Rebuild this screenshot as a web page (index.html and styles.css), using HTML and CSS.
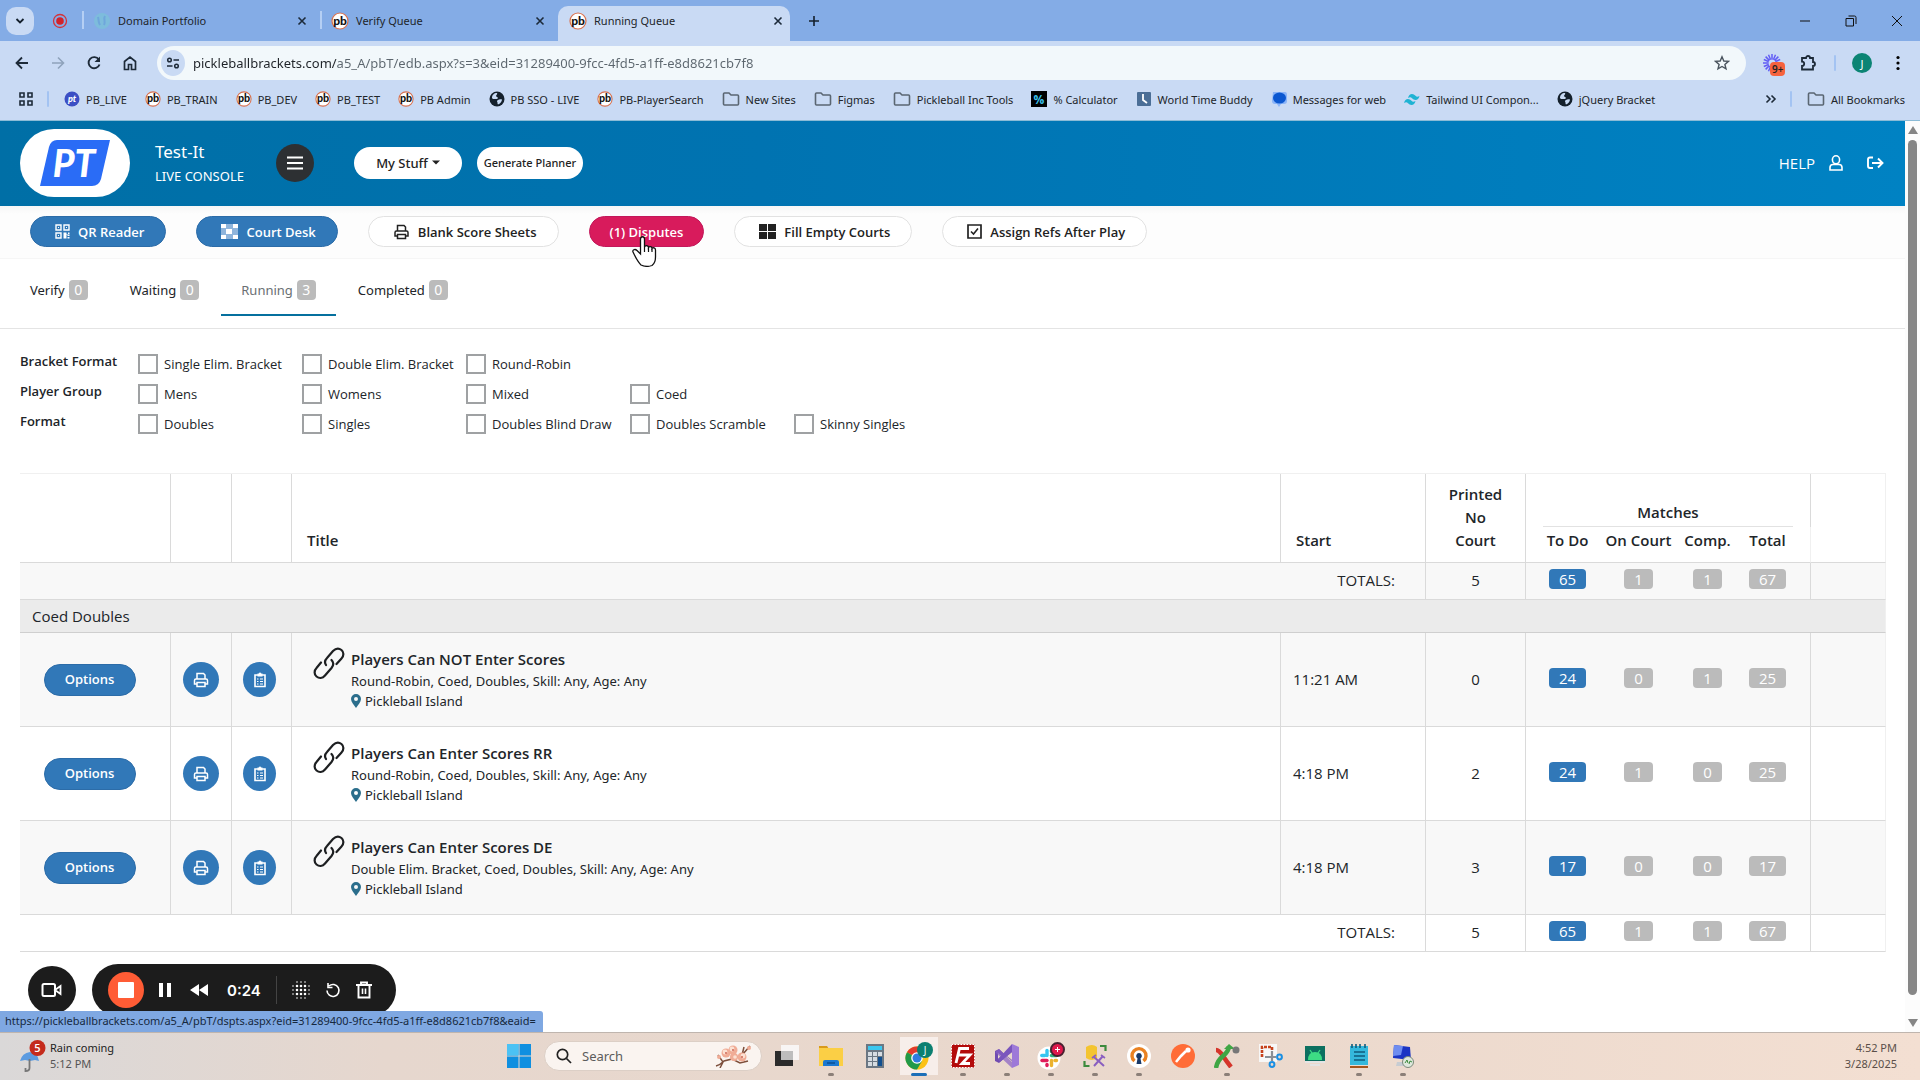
FILE: index.html
```html
<!DOCTYPE html>
<html lang="en">
<head>
<meta charset="utf-8">
<title>Running Queue</title>
<link rel="stylesheet" href="styles.css">
</head>
<body>
<svg class="defs" aria-hidden="true">
  <defs>
    <symbol id="i-pb" viewBox="0 0 18 18"><circle cx="9" cy="9" r="8" fill="#fff" stroke="#d9714f" stroke-width="1.200"/><text x="9" y="12.600" text-anchor="middle" class="glyph-pb">pb</text></symbol>
    <symbol id="i-globe" viewBox="0 0 16 16"><circle cx="8" cy="8" r="7.500" fill="#14202c"/><path d="M3 7c0-3 2-5 5-5 1 1-1 2-1 3s2 1 2 2-2 1-3 1-3 0-3-1zM9 9c1-1 3-1 4-.500 0 2-2 4.500-4 5-1-1 0-2-1-3 0-1 .5-1 1-1.500z" fill="#c8daf4"/></symbol>
    <symbol id="i-folder" viewBox="0 0 18 16"><path d="M1.500 3.500v9.500q0 1 1 1h13q1 0 1-1V5q0-1-1-1H9L7 2H2.500q-1 0-1 1z" fill="none" stroke="#5a6672" stroke-width="1.600"/></symbol>
    <symbol id="i-x" viewBox="0 0 10 10"><path d="M1.500 1.500l7 7M8.500 1.500l-7 7" stroke="#1c2a3a" stroke-width="1.600" fill="none"/></symbol>
    <symbol id="i-printer" viewBox="0 0 16 16"><path d="M4 7V1.500h6.500L12 3v4M4 12H1.500V8.500Q1.500 7 3 7h10q1.500 0 1.500 1.500V12H12M4 10.500h8v4H4z" fill="none" stroke="currentColor" stroke-width="1.500"/></symbol>
    <symbol id="i-clip" viewBox="0 0 14 16"><path d="M2 3h10v11.500H2z" fill="none" stroke="currentColor" stroke-width="1.600"/><path d="M4.500 1.500h1.500a1 1 0 0 1 2 0h1.500v3h-5z" fill="currentColor"/><path d="M4 7h1.500M7 7h3M4 9.500h1.500M7 9.500h3M4 12h1.500M7 12h3" stroke="currentColor" stroke-width="1.200"/></symbol>
    <symbol id="i-link" viewBox="0 0 32 32"><g fill="none" stroke="#1d1f21" stroke-width="2.200" stroke-linecap="round"><path d="M13 18c-2-3-1-5 1-7l6-7c3-3 6-3 8.500-1s2.500 6 0 8.500l-5 5.500"/><path d="M18.500 13c2.500 2.500 2 5.500 0 8l-6.500 7.500c-2.500 3-6 3-8.500 1s-2.500-6 0-8.500L8 15.500"/></g></symbol>
    <symbol id="i-pin" viewBox="0 0 10 14"><path d="M5 0a5 5 0 0 1 5 5c0 3-3 6-5 9C3 11 0 8 0 5a5 5 0 0 1 5-5zm0 3a2 2 0 1 0 0 4 2 2 0 0 0 0-4z" fill="#2b6e8c" fill-rule="evenodd"/></symbol>
  </defs>
</svg>

<header class="browser">
  <div class="tabstrip">
    <button class="tab-menu" aria-label="Search tabs"><svg width="10" height="8" viewBox="0 0 10 8"><path d="M1.500 2L5 5.500 8.500 2" fill="none" stroke="#14202c" stroke-width="1.800"/></svg></button>
    <svg class="rec-dot" width="16" height="16" viewBox="0 0 16 16"><circle cx="8" cy="8" r="6.500" fill="none" stroke="#d2333a" stroke-width="1.300"/><circle cx="8" cy="8" r="3.800" fill="#d2232a"/></svg>
    <div class="tab first"><svg width="18" height="18" viewBox="0 0 18 18"><circle cx="9" cy="9" r="8" fill="#7dbcdc"/><path d="M5 5c1 3 0 5 2 8M12 4c-2 3 1 5-1 9" stroke="#6fa6dc" fill="none" stroke-width="2"/></svg><span>Domain Portfolio</span><button aria-label="Close tab"><svg width="10" height="10"><use href="#i-x"/></svg></button></div>
    <div class="tab"><svg width="18" height="18"><use href="#i-pb"/></svg><span>Verify Queue</span><button aria-label="Close tab"><svg width="10" height="10"><use href="#i-x"/></svg></button></div>
    <div class="tab active"><svg width="18" height="18"><use href="#i-pb"/></svg><span>Running Queue</span><button aria-label="Close tab"><svg width="10" height="10"><use href="#i-x"/></svg></button></div>
    <button class="bare new-tab" aria-label="New tab"><svg width="12" height="12" viewBox="0 0 12 12"><path d="M6 1v10M1 6h10" stroke="#14202c" stroke-width="1.600"/></svg></button>
    <div class="win-controls">
      <button class="bare" aria-label="Minimize"><svg width="12" height="12" viewBox="0 0 12 12"><path d="M1 6h10" stroke="#111"/></svg></button>
      <button class="bare" aria-label="Restore"><svg width="12" height="12" viewBox="0 0 12 12"><path d="M1 3.500h7.500v7.500H1zM3.500 1H9.500q1.500 0 1.500 1.500V9" fill="none" stroke="#111"/></svg></button>
      <button class="bare" aria-label="Close"><svg width="12" height="12" viewBox="0 0 12 12"><path d="M1 1l10 10M11 1L1 11" stroke="#111"/></svg></button>
    </div>
  </div>

  <div class="navbar">
    <button class="bare nav" aria-label="Back"><svg width="16" height="16" viewBox="0 0 16 16"><path d="M14 8H3M8 2.500L2.500 8 8 13.500" fill="none" stroke="#1d2a38" stroke-width="1.800"/></svg></button>
    <button class="bare nav" aria-label="Forward"><svg width="16" height="16" viewBox="0 0 16 16"><path d="M2 8h11M8 2.500L13.500 8 8 13.500" fill="none" stroke="#8fa3bb" stroke-width="1.600"/></svg></button>
    <button class="bare nav" aria-label="Reload"><svg width="16" height="16" viewBox="0 0 16 16"><path d="M12.800 4.500A5.600 5.600 0 1 0 13.500 9.500" fill="none" stroke="#1d2a38" stroke-width="1.900"/><path d="M14 1.500v5.500H8.500z" fill="#1d2a38"/></svg></button>
    <button class="bare nav" aria-label="Home"><svg width="16" height="16" viewBox="0 0 16 16"><path d="M2.500 14.500V6.500L8 2l5.500 4.500v8h-4v-5h-3v5z" fill="none" stroke="#1d2a38" stroke-width="1.700"/></svg></button>
    <div class="omnibox">
      <button class="site-info" aria-label="View site information"><svg width="14" height="14" viewBox="0 0 14 14"><path d="M7.500 4H13M1 10h5.500" stroke="#1d2a38" stroke-width="1.600"/><circle cx="3.500" cy="4" r="1.800" fill="none" stroke="#1d2a38" stroke-width="1.500"/><circle cx="10.500" cy="10" r="1.800" fill="none" stroke="#1d2a38" stroke-width="1.500"/></svg></button>
      <input class="url" aria-label="Address" value="pickleballbrackets.com/a5_A/pbT/edb.aspx?s=3&amp;eid=31289400-9fcc-4fd5-a1ff-e8d8621cb7f8">
      <button class="bare" aria-label="Bookmark this tab"><svg width="16" height="16" viewBox="0 0 16 16"><path d="M8 1.800l1.800 4.200 4.600.4-3.500 3 1.100 4.500L8 11.500l-4 2.400 1.100-4.500-3.500-3 4.600-.4z" fill="none" stroke="#4a545e" stroke-width="1.400"/></svg></button>
    </div>
    <button class="bare ext" aria-label="Recorder extension"><svg width="18" height="18" viewBox="0 0 18 18"><path d="M9 0v18M0 9h18M2.600 2.600l12.800 12.800M15.400 2.600L2.600 15.400M5.500 .8l7 16.400M.8 5.500l16.400 7M12.500.8l-7 16.400M17.200 5.500l-16.400 7" stroke="#625df5" stroke-width="1.500"/><circle cx="9" cy="9" r="3.500" fill="#c8daf4"/></svg><span class="ext-badge">9+</span></button>
    <button class="bare nav" aria-label="Extensions"><svg width="18" height="18" viewBox="0 0 18 18"><path d="M3 4h4a2 2 0 0 1 4 0h3v4a2 2 0 0 1 0 4v3.500H3V12a2.200 2.200 0 0 0 0-4.400z" fill="none" stroke="#1d2a38" stroke-width="1.800"/></svg></button>
    <span class="vline"></span>
    <button class="avatar" aria-label="Profile">J</button>
    <button class="bare dots" aria-label="Menu"><svg width="4" height="16" viewBox="0 0 4 16"><circle cx="2" cy="2.500" r="1.600"/><circle cx="2" cy="8" r="1.600"/><circle cx="2" cy="13.500" r="1.600"/></svg></button>
  </div>

  <nav class="bookmarks">
    <button class="bare apps" aria-label="Apps"><svg width="16" height="16" viewBox="0 0 16 16"><path d="M2 2h4v4H2zM10 2h4v4h-4zM2 10h4v4H2zM10 10h4v4h-4z" fill="none" stroke="#1d2a38" stroke-width="1.600"/></svg></button>
    <span class="vline"></span>
    <a href="#"><svg width="16" height="16" viewBox="0 0 16 16"><circle cx="8" cy="8" r="7.500" fill="#3c4fc4"/><text x="8" y="11" text-anchor="middle" class="glyph-pt">pt</text></svg>PB_LIVE</a>
    <a href="#"><svg width="16" height="16"><use href="#i-pb"/></svg>PB_TRAIN</a>
    <a href="#"><svg width="16" height="16"><use href="#i-pb"/></svg>PB_DEV</a>
    <a href="#"><svg width="16" height="16"><use href="#i-pb"/></svg>PB_TEST</a>
    <a href="#"><svg width="16" height="16"><use href="#i-pb"/></svg>PB Admin</a>
    <a href="#"><svg width="16" height="16"><use href="#i-globe"/></svg>PB SSO - LIVE</a>
    <a href="#"><svg width="16" height="16"><use href="#i-pb"/></svg>PB-PlayerSearch</a>
    <a href="#"><svg width="18" height="16"><use href="#i-folder"/></svg>New Sites</a>
    <a href="#"><svg width="18" height="16"><use href="#i-folder"/></svg>Figmas</a>
    <a href="#"><svg width="18" height="16"><use href="#i-folder"/></svg>Pickleball Inc Tools</a>
    <a href="#"><svg width="16" height="16" viewBox="0 0 16 16"><path d="M0 0h16v16H0z"/><text x="8" y="12.500" text-anchor="middle" class="glyph-pct">%</text></svg>% Calculator</a>
    <a href="#"><svg width="16" height="16" viewBox="0 0 16 16"><rect x="1" y="1" width="14" height="14" rx="1" fill="#4b6e96"/><path d="M7 3v6l4 3" fill="none" stroke="#fff" stroke-width="1.800"/></svg>World Time Buddy</a>
    <a href="#"><svg width="16" height="16" viewBox="0 0 16 16"><path d="M2 1h12q2 0 2 3v6q0 3-3 3h-3l-2 3-2-3H4q-3 0-3-3z" fill="#8ab4f8"/><ellipse cx="8.500" cy="7" rx="6.500" ry="5.500" fill="#0b57d0"/></svg>Messages for web</a>
    <a href="#"><svg width="16" height="16" viewBox="0 0 16 16"><path d="M4 7q1-4 4-4 2 0 3.500 1.800T15.500 5q-1 4-4 4-2 0-3.500-1.800T4 7zM0 12q1-4 4-4 2 0 3.500 1.800T11.500 10q-1 4-4 4-2 0-3.500-1.800T0 12z" fill="#1fb3d3"/></svg>Tailwind UI Compon...</a>
    <a href="#"><svg width="16" height="16"><use href="#i-globe"/></svg>jQuery Bracket</a>
    <button class="bare more" aria-label="More bookmarks"><svg width="12" height="10" viewBox="0 0 12 10"><path d="M1.500 1.500L5 5 1.500 8.500M6.500 1.500L10 5 6.500 8.500" fill="none" stroke="#1d2a38" stroke-width="1.600"/></svg></button>
    <span class="vline"></span>
    <a href="#" class="all"><svg width="18" height="16"><use href="#i-folder"/></svg>All Bookmarks</a>
  </nav>
</header>

<div class="viewport">
  <main class="page">
    <div class="site-header">
      <a href="#" class="logo" aria-label="PT home"><svg width="70" height="46" viewBox="0 0 70 46"><path d="M17 0H70L61 39q-2 7-9 7H0L9 7q2-7 8-7z" fill="#2a6cf6"/><text x="34" y="37" text-anchor="middle" class="glyph-logo">PT</text></svg></a>
      <div class="event"><div class="event-name">Test-It</div><div class="event-mode">LIVE CONSOLE</div></div>
      <button class="menu" aria-label="Menu"><svg width="16" height="14" viewBox="0 0 16 14"><path d="M0 1.500h16M0 7h16M0 12.500h16" stroke="#fff" stroke-width="2.200"/></svg></button>
      <button class="pill my-stuff">My Stuff<svg width="8" height="5" viewBox="0 0 8 5"><path d="M0 .5h8L4 4.500z" fill="#222"/></svg></button>
      <button class="pill planner">Generate Planner</button>
      <div class="account">
        <a href="#">HELP</a>
        <a href="#" aria-label="Account"><svg width="14" height="16" viewBox="0 0 14 16"><ellipse cx="7" cy="4.800" rx="3.600" ry="4" fill="none" stroke="#fff" stroke-width="1.600"/><path d="M4 9.500h6q3 0 3 3v2.500H1v-2.500q0-3 3-3z" fill="none" stroke="#fff" stroke-width="1.600"/></svg></a>
        <a href="#" aria-label="Log out"><svg width="17" height="14" viewBox="0 0 17 14"><path d="M6 1.500H3Q1 1.500 1 3.500v6.500q0 2 2 2h3M5 7h10M11 2.500L15.500 7 11 11.500" fill="none" stroke="#fff" stroke-width="1.900"/></svg></a>
      </div>
    </div>

    <div class="actions">
      <button class="btn blue"><svg width="15" height="15" viewBox="0 0 15 15"><path d="M1 1h5v5H1zM9 1h5v5H9zM1 9h5v5H1z" fill="none" stroke="#fff" stroke-width="1.400"/><path d="M3 3h1v1H3zM11 3h1v1h-1zM3 11h1v1H3zM8.500 8.500h3v2h3V12h-2v-1h-1v3.500h-3zM13 8.500h1.500V10H13zM12.500 13h2v1.500h-2z" fill="#fff"/></svg>QR Reader</button>
      <button class="btn blue"><svg width="17" height="15" viewBox="0 0 17 15"><path d="M0 0h17v15H0z" fill="#8fb5dc"/><path d="M0 0h5v4H0zM12 0h5v4h-5zM5 5h6v5H5zM0 11h5v4H0zM12 11h5v4h-5z" fill="#fff"/></svg>Court Desk</button>
      <button class="btn"><svg width="17" height="16"><use href="#i-printer"/></svg>Blank Score Sheets</button>
      <div class="dispute-wrap">
        <button class="btn red">(1) Disputes</button>
        <svg class="cursor" width="26" height="32" viewBox="0 0 26 32"><path d="M9 30C5 26 3 21 1 17c-1-2 2-3.500 4-1.500l3.500 3.500V4c0-3 4-3 4 0v8c1-2 4-1.500 4 .5 1-1.500 3.500-1 3.500 1 1-1.500 3.500-.5 3.500 1.500v7c0 4-1.500 7-3.500 8.500q-5.500 2-11-.5z" fill="#fff" stroke="#111" stroke-width="1.300"/><path d="M12.500 12v5M16.500 13v4M20 14v3" stroke="#111" stroke-width="1.200"/></svg>
      </div>
      <button class="btn"><svg width="17" height="15" viewBox="0 0 17 15"><path d="M0 0h8v7H0zM9 0h8v7H9zM0 8h8v7H0zM9 8h8v7H9z" fill="#222"/></svg>Fill Empty Courts</button>
      <button class="btn"><svg width="15" height="15" viewBox="0 0 15 15"><path d="M1 1h13v13H1z" fill="none" stroke="#222" stroke-width="1.700"/><path d="M4 7.500L6.500 10 11 4.500" fill="none" stroke="#222" stroke-width="1.600"/></svg>Assign Refs After Play</button>
    </div>

    <nav class="queue-tabs">
      <a href="#">Verify<span class="count">0</span></a>
      <a href="#">Waiting<span class="count">0</span></a>
      <a href="#" class="current">Running<span class="count">3</span></a>
      <a href="#">Completed<span class="count">0</span></a>
    </nav>

    <form class="filters">
      <div class="filter-row" role="group" aria-label="Bracket Format"><strong>Bracket Format</strong>
        <label><input type="checkbox">Single Elim. Bracket</label><label><input type="checkbox">Double Elim. Bracket</label><label><input type="checkbox">Round-Robin</label></div>
      <div class="filter-row" role="group" aria-label="Player Group"><strong>Player Group</strong>
        <label><input type="checkbox">Mens</label><label><input type="checkbox">Womens</label><label><input type="checkbox">Mixed</label><label><input type="checkbox">Coed</label></div>
      <div class="filter-row" role="group" aria-label="Format"><strong>Format</strong>
        <label><input type="checkbox">Doubles</label><label><input type="checkbox">Singles</label><label><input type="checkbox">Doubles Blind Draw</label><label><input type="checkbox">Doubles Scramble</label><label><input type="checkbox">Skinny Singles</label></div>
    </form>

    <table class="queue">
      <colgroup><col class="c-opt"><col class="c-print"><col class="c-clip"><col><col class="c-start"><col class="c-court"><col class="c-todo"><col class="c-on"><col class="c-comp"><col class="c-total"><col class="c-end"></colgroup>
      <thead>
        <tr><th rowspan="2"></th><th rowspan="2"></th><th rowspan="2"></th><th rowspan="2" class="left">Title</th><th rowspan="2" class="left">Start</th><th rowspan="2">Printed<br>No<br>Court</th><th colspan="4" class="matches"><div>Matches</div></th><th rowspan="2"></th></tr>
        <tr class="sub"><th class="open todo">To Do</th><th class="open">On Court</th><th class="open">Comp.</th><th class="total">Total</th></tr>
      </thead>
      <tbody>
        <tr class="totals shade"><td colspan="5" class="sum">TOTALS:</td><td>5</td><td class="open todo"><span class="num hot">65</span></td><td class="open"><span class="num">1</span></td><td class="open"><span class="num">1</span></td><td class="total"><span class="num">67</span></td><td></td></tr>
        <tr class="group"><td colspan="11">Coed Doubles</td></tr>
        <tr class="item shade"><td><button class="options">Options</button></td><td><button class="round" aria-label="Print"><svg width="16" height="16"><use href="#i-printer"/></svg></button></td><td class="sheet"><button class="round" aria-label="Score sheet"><svg width="14" height="16"><use href="#i-clip"/></svg></button></td>
          <td><div class="entry"><svg width="32" height="32"><use href="#i-link"/></svg><div><div class="name">Players Can NOT Enter Scores</div><div class="meta">Round-Robin, Coed, Doubles, Skill: Any, Age: Any</div><div class="meta"><svg width="10" height="14"><use href="#i-pin"/></svg>Pickleball Island</div></div></div></td>
          <td class="time">11:21 AM</td><td>0</td><td class="open todo"><span class="num hot">24</span></td><td class="open"><span class="num">0</span></td><td class="open"><span class="num">1</span></td><td class="total"><span class="num">25</span></td><td></td></tr>
        <tr class="item"><td><button class="options">Options</button></td><td><button class="round" aria-label="Print"><svg width="16" height="16"><use href="#i-printer"/></svg></button></td><td class="sheet"><button class="round" aria-label="Score sheet"><svg width="14" height="16"><use href="#i-clip"/></svg></button></td>
          <td><div class="entry"><svg width="32" height="32"><use href="#i-link"/></svg><div><div class="name">Players Can Enter Scores RR</div><div class="meta">Round-Robin, Coed, Doubles, Skill: Any, Age: Any</div><div class="meta"><svg width="10" height="14"><use href="#i-pin"/></svg>Pickleball Island</div></div></div></td>
          <td class="time">4:18 PM</td><td>2</td><td class="open todo"><span class="num hot">24</span></td><td class="open"><span class="num">1</span></td><td class="open"><span class="num">0</span></td><td class="total"><span class="num">25</span></td><td></td></tr>
        <tr class="item shade"><td><button class="options">Options</button></td><td><button class="round" aria-label="Print"><svg width="16" height="16"><use href="#i-printer"/></svg></button></td><td class="sheet"><button class="round" aria-label="Score sheet"><svg width="14" height="16"><use href="#i-clip"/></svg></button></td>
          <td><div class="entry"><svg width="32" height="32"><use href="#i-link"/></svg><div><div class="name">Players Can Enter Scores DE</div><div class="meta">Double Elim. Bracket, Coed, Doubles, Skill: Any, Age: Any</div><div class="meta"><svg width="10" height="14"><use href="#i-pin"/></svg>Pickleball Island</div></div></div></td>
          <td class="time">4:18 PM</td><td>3</td><td class="open todo"><span class="num hot">17</span></td><td class="open"><span class="num">0</span></td><td class="open"><span class="num">0</span></td><td class="total"><span class="num">17</span></td><td></td></tr>
        <tr class="totals"><td colspan="5" class="sum">TOTALS:</td><td>5</td><td class="open todo"><span class="num hot">65</span></td><td class="open"><span class="num">1</span></td><td class="open"><span class="num">1</span></td><td class="total"><span class="num">67</span></td><td></td></tr>
      </tbody>
    </table>
  </main>
  <div class="scrollbar"><svg width="10" height="8" viewBox="0 0 10 8"><path d="M5 0l5 8H0z" fill="#858585"/></svg><div class="thumb"></div><svg width="10" height="8" viewBox="0 0 10 8"><path d="M0 0h10L5 8z" fill="#858585"/></svg></div>

  <div class="recorder">
    <button class="camera" aria-label="Camera"><svg width="22" height="16" viewBox="0 0 22 16"><rect x="1.500" y="2" width="12.500" height="12" rx="1.500" fill="none" stroke="#fff" stroke-width="2"/><path d="M14 8l5.500-4v8z" fill="none" stroke="#fff" stroke-width="1.800"/></svg></button>
    <div class="rec-bar">
      <button class="stop" aria-label="Stop"><svg width="16" height="16" viewBox="0 0 16 16"><rect width="16" height="16" rx="1" fill="#fff"/></svg></button>
      <button class="bare" aria-label="Pause"><svg width="12" height="14" viewBox="0 0 12 14"><path d="M0 0h4v14H0zM8 0h4v14H8z" fill="#fff"/></svg></button>
      <button class="bare spaced" aria-label="Rewind"><svg width="18" height="12" viewBox="0 0 18 12"><path d="M9 0v12L0 6zM18 0v12L9 6z" fill="#fff"/></svg></button>
      <span class="clock spaced">0:24</span>
      <span class="rec-sep"></span>
      <button class="bare" aria-label="Blur"><svg width="18" height="18" viewBox="0 0 18 18"><g stroke="#fff" stroke-linecap="round"><path d="M5 1h.01M9 1h.01M13 1h.01M5 17h.01M9 17h.01M13 17h.01M1 5h.01M1 9h.01M1 13h.01M17 5h.01M17 9h.01M17 13h.01" stroke-width="1.600"/><path d="M5 5h.01M9 5h.01M13 5h.01M5 9h.01M9 9h.01M13 9h.01M5 13h.01M9 13h.01M13 13h.01" stroke-width="2.600"/></g></svg></button>
      <button class="bare" aria-label="Restart"><svg width="16" height="16" viewBox="0 0 16 16"><path d="M4 4a6 6 0 1 1-2 4.500M3 1v4.500h4.500" fill="none" stroke="#fff" stroke-width="1.600"/></svg></button>
      <button class="bare" aria-label="Delete"><svg width="16" height="18" viewBox="0 0 16 18"><path d="M0 4h16M5 4V1.500h6V4M2.500 4v12.500h11V4" fill="none" stroke="#fff" stroke-width="1.900"/><path d="M6.500 7.500v5.500M9.500 7.500v5.500" stroke="#fff" stroke-width="1.600"/></svg></button>
    </div>
  </div>
  <div class="status">https://pickleballbrackets.com/a5_A/pbT/dspts.aspx?eid=31289400-9fcc-4fd5-a1ff-e8d8621cb7f8&amp;eaid=</div>
</div>

<footer class="taskbar">
  <button class="weather">
    <svg width="30" height="34" viewBox="0 0 30 34"><path d="M0 22q2-8 10-9 8 1 9 9l-4-1-5 1-5-1z" fill="#5b9be0"/><path d="M9.500 20v9q0 3-4 3v-3" fill="none" stroke="#777" stroke-width="1.800"/><circle cx="17.500" cy="9" r="8" fill="#c42b1c"/><text x="17.500" y="13" text-anchor="middle" class="glyph-badge">5</text></svg>
    <span><span class="w1">Rain coming</span><span class="w2">5:12 PM</span></span>
  </button>
  <div class="tb-center">
    <button class="bare app" aria-label="Start"><svg width="24" height="24" viewBox="0 0 24 24"><path d="M0 0h11.500v11.500H0zM12.500 0H24v11.500H12.500zM0 12.500h11.500V24H0zM12.500 12.500H24V24H12.500z" fill="#0f8fe0"/><path d="M0 0h11.500v11.500H0z" fill="#4cc2f4"/></svg></button>
    <div class="search"><svg width="16" height="16" viewBox="0 0 16 16"><circle cx="6.500" cy="6.500" r="5.200" fill="none" stroke="#222" stroke-width="1.700"/><path d="M10.500 10.500l4.500 4.500" stroke="#222" stroke-width="1.700"/></svg><input type="text" placeholder="Search" aria-label="Search">
      <svg width="38" height="24" viewBox="0 0 38 24"><path d="M1 22q4-1 8-5l8-2 10-4 8-9M5 24l3-6-5-7M17 15l8 4 8-2M27 11l2-8" stroke="#7d4f3c" stroke-width="1.500" fill="none"/><g fill="#f0ac96"><circle cx="11" cy="9" r="4.500"/><circle cx="18" cy="6" r="4.500"/><circle cx="27" cy="13" r="4.500"/><circle cx="19" cy="13" r="4"/><circle cx="34" cy="4" r="2"/><circle cx="4" cy="13" r="2"/></g><g fill="#fbe1d3"><circle cx="10" cy="8" r="2.400"/><circle cx="17" cy="5" r="2.400"/><circle cx="28" cy="12" r="2.400"/><circle cx="20" cy="13" r="1.800"/></g><g fill="#c75b4a"><circle cx="11" cy="9" r=".9"/><circle cx="18" cy="6" r=".9"/><circle cx="27" cy="13" r=".9"/></g></svg></div>
    <button class="bare app" aria-label="Task view"><svg width="24" height="24" viewBox="0 0 24 24"><path d="M0 7h18v15H0z" fill="#2b2b2b"/><path d="M6 1h18v15H6z" fill="#fafafa" fill-opacity=".85"/><path d="M6 7h12v9H6z" fill="#bdbdbd"/></svg></button>
    <button class="bare app run" aria-label="File Explorer"><svg width="24" height="24" viewBox="0 0 24 24"><path d="M0 2h8l2 3H0z" fill="#d99a1c"/><path d="M0 4h24v18H0z" fill="#fbcf45"/><path d="M4 22v-4q0-2 2-2h12q2 0 2 2v4z" fill="#1b78d0"/><path d="M8 19h8" stroke="#0b4f94" stroke-width="1.500"/></svg></button>
    <button class="bare app" aria-label="Calculator"><svg width="24" height="24" viewBox="0 0 24 24"><path d="M3 0h18v24H3z" fill="#6b7783"/><path d="M5 2h14v4H5z" fill="#3cc8f0"/><path d="M5 8h4v4H5zM10 8h4v4h-4zM15 8h4v4h-4zM5 13h4v4H5zM10 13h4v4h-4zM5 18h4v4H5zM10 18h4v4h-4z" fill="#d6dce2"/><path d="M15 13h4v9h-4z" fill="#124f8f"/></svg></button>
    <button class="bare app front" aria-label="Chrome"><svg width="28" height="28" viewBox="0 0 28 28"><circle cx="12" cy="16" r="11.500" fill="#fbc116"/><path d="M12 16L2 10.200A11.500 11.500 0 0 1 22 10.200z" fill="#e33b2e"/><path d="M12 16L2 10.200A11.500 11.500 0 0 0 12 27.500l5-8.500z" fill="#229a4a"/><circle cx="12" cy="16" r="5.800" fill="#fff"/><circle cx="12" cy="16" r="4.500" fill="#2f7de1"/><circle cx="20" cy="8" r="8" fill="#0b7f70"/><text x="20" y="11.500" text-anchor="middle" class="glyph-j">J</text></svg></button>
    <button class="bare app run" aria-label="FileZilla"><svg width="24" height="24" viewBox="0 0 24 24"><path d="M.5.500h23v23H.5z" fill="#b30b0b" stroke="#fff" stroke-dasharray="1.500 1.500"/><path d="M5 19L8.500 4.500H18M7 11h6M12 11h7l-8 8.500h8" fill="none" stroke="#fff" stroke-width="2.800"/></svg></button>
    <button class="bare app run" aria-label="Visual Studio"><svg width="24" height="24" viewBox="0 0 24 24"><path d="M0 7l4-2 13 12V7L4 19l-4-2z" fill="#6f4bb0"/><path d="M3 9v6l3.500-3zM17 8l-5 4 5 4z" fill="#e8d8cd"/><path d="M4 5l14 14-1 5L0 8z" fill="#865fc5" fill-opacity=".7"/><path d="M17 0l7 3v18l-7 3z" fill="#9d79d8"/><path d="M17 0L3 15l2 3L17 8z" fill="#7a55bd"/></svg></button>
    <button class="bare app run" aria-label="Slack"><svg width="28" height="28" viewBox="0 0 28 28"><circle cx="12" cy="16" r="11.500" fill="#fff"/><g stroke-width="3.400" stroke-linecap="round"><path d="M10 8.500v5" stroke="#36c5f0"/><path d="M4.800 13.500h3" stroke="#36c5f0"/><path d="M14.500 13.500h5" stroke="#2eb67d"/><path d="M14.500 8.500v1" stroke="#2eb67d"/><path d="M5 18.500h5" stroke="#e01e5a"/><path d="M10 22.500v1" stroke="#e01e5a"/><path d="M14.500 18.500v5M18 18.500h1.500" stroke="#ecb22e"/></g><circle cx="20.500" cy="7.500" r="6.500" fill="#e0184c" stroke="#4a2030" stroke-width="2"/><path d="M18 7.500h5M20.500 5v5" stroke="#fff"/></svg></button>
    <button class="bare app run" aria-label="Database tool"><svg width="24" height="24" viewBox="0 0 24 24"><path d="M3 3q6-4 11 0v11q-5 4-11 0z" fill="#f4c430"/><path d="M17 2h5.500v5M1.500 17v5h5" fill="none" stroke="#3d8b3d" stroke-width="2.200"/><path d="M11 13l10 9M20 12l-9 10" stroke="#8a5fc0" stroke-width="2"/><path d="M9 14l4-3M18 11l4 3" stroke="#8a5fc0" stroke-width="1.600"/></svg></button>
    <button class="bare app run" aria-label="OpenVPN"><svg width="24" height="24" viewBox="0 0 24 24"><circle cx="12" cy="12" r="12" fill="#fff"/><path d="M7.500 17a7 7 0 1 1 9 0" fill="none" stroke="#ea8222" stroke-width="3.400"/><path d="M12 9a3 3 0 0 1 1.500 5.500L14.500 20h-5l1-5.500A3 3 0 0 1 12 9z" fill="#1a3967"/></svg></button>
    <button class="bare app" aria-label="Postman"><svg width="24" height="24" viewBox="0 0 24 24"><circle cx="12" cy="12" r="12" fill="#ff6c37"/><path d="M5 18l5-6 5-5" stroke="#fff" stroke-width="2.600"/><circle cx="17" cy="6" r="2.600" fill="#fff"/></svg></button>
    <button class="bare app run" aria-label="Version control"><svg width="26" height="24" viewBox="0 0 26 24"><path d="M2 6q3 0 7 6t8 11" fill="none" stroke="#d5352b" stroke-width="4.500"/><path d="M2 24q1-7 7-12t6-10" fill="none" stroke="#3fa644" stroke-width="4.500"/><path d="M10 5l5-5 6 5z" fill="#3fa644"/><circle cx="22" cy="6" r="3.500" fill="#777"/></svg></button>
    <button class="bare app" aria-label="Snipping Tool"><svg width="24" height="24" viewBox="0 0 24 24"><path d="M0 0h18v18H0z" fill="#f7f7f7"/><path d="M3 13V3h10v3" fill="none" stroke="#c7421c" stroke-width="2.600" stroke-dasharray="3 1"/><path d="M13 7v10M6 13h11" stroke="#8a8f95" stroke-width="2.200"/><circle cx="20.500" cy="13" r="2.400" fill="none" stroke="#1a8fe3" stroke-width="2"/><circle cx="13" cy="20.500" r="2.400" fill="none" stroke="#1a8fe3" stroke-width="2"/></svg></button>
    <button class="bare app" aria-label="Android device"><svg width="24" height="24" viewBox="0 0 24 24"><path d="M2 2h20v15H2z" fill="#0c7060"/><path d="M5 16q0-8 7-8t7 8z" fill="#3ddc84"/><path d="M7 6l2 3M17 6l-2 3" stroke="#3ddc84" stroke-width="1.300"/><path d="M2 17h20v2H2zM7 20h10v2H7z" fill="#e4e4e4"/></svg></button>
    <button class="bare app run" aria-label="Notepad"><svg width="24" height="24" viewBox="0 0 24 24"><path d="M3 2h18v19H3z" fill="#35b8dc"/><path d="M3 22h18v2H3z" fill="#a4551e"/><path d="M5 0v4M9 0v4M13 0v4M18 0v4M7 8h11M7 12h11M7 16h11" stroke="#0f5b7c" stroke-width="1.600"/></svg></button>
    <button class="bare app run" aria-label="Remote Desktop"><svg width="24" height="24" viewBox="0 0 24 24"><path d="M3 1l16 2 1 13-18-2z" fill="#1b35c4"/><path d="M3 1l9 1-2 9-8 1z" fill="#6e8df0"/><path d="M6 18h10l2 4H5z" fill="#c7ccd2"/><circle cx="17" cy="18" r="5.500" fill="#dfe8dc" stroke="#7c8a7c"/><path d="M14 19l2-3 1 3M18 20l1-3 2 1" stroke="#3d8b3d" fill="none"/></svg></button>
  </div>
  <div class="datetime"><div>4:52 PM</div><div>3/28/2025</div></div>
</footer>
</body>
</html>
```
FILE: styles.css
```css
* { box-sizing: border-box; }
body {
  margin: 0;
  min-height: 100vh;
  display: flex;
  flex-direction: column;
  font-family: "Noto Sans", "Open Sans", sans-serif;
  font-size: 13px;
  color: #212529;
  background: #fff;
}
button, input { font: inherit; color: inherit; }
button { cursor: pointer; }
a { color: inherit; text-decoration: none; }
svg { flex: none; display: block; }
.defs { position: absolute; width: 0; height: 0; }
.bare { border: 0; padding: 0; background: none; display: flex; align-items: center; justify-content: center; }

.glyph-pb { font: 900 12px Lato, sans-serif; fill: #111; }
.glyph-pt { font: italic 900 9px Lato, sans-serif; fill: #fff; }
.glyph-pct { font: 700 12px "Open Sans", sans-serif; fill: #3cc0ea; }
.glyph-logo { font: italic 900 37px Lato, sans-serif; fill: #fff; }
.glyph-badge { font: 600 11px "Open Sans", sans-serif; fill: #fff; }
.glyph-j { font: 10px "Open Sans", sans-serif; fill: #fff; }

/* browser chrome */
.browser { background: #c9daf4; border-bottom: 1px solid #8bbbd6; }
.tabstrip {
  display: flex;
  align-items: center;
  height: 41px;
  padding-left: 6px;
  background: #84ace6;
  font-size: 11px;
}
.tab-menu {
  width: 28px; height: 28px; margin-right: 18px; padding: 0;
  display: flex; align-items: center; justify-content: center;
  border: 0; border-radius: 10px; background: #c9daf4;
}
.rec-dot { margin-right: 14px; }
.tab { display: flex; align-items: center; gap: 7px; width: 238px; height: 35px; margin-top: 6px; padding: 0 13px 6px 9px; border-left: 2px solid #b5cff4; border-image: linear-gradient(transparent 6px, #b5cff4 6px, #b5cff4 23px, transparent 23px) 1; }
.tab span { flex: 1; }
.tab button { border: 0; padding: 0; background: none; }
.tab.active { width: 232px; border: 0; border-radius: 10px 10px 0 0; background: #c9daf4; padding: 0 7px 6px 11px; }
.new-tab { margin-left: 18px; }
.win-controls { display: flex; gap: 34px; margin-left: auto; padding-right: 17px; }
.navbar { display: flex; align-items: center; height: 44px; padding: 0 12px 0 4px; }
.nav { width: 36px; height: 34px; }
.omnibox { flex: 1; display: flex; align-items: center; height: 34px; margin-left: 9px; padding: 0 16px 0 4px; border-radius: 17px; background: #f2f8fb; }
.site-info { width: 24px; height: 26px; padding: 0; display: flex; align-items: center; justify-content: center; border: 0; border-radius: 50%; background: #c9daf4; }
/* the host part of the address is darker than the path */
.url { flex: 1; min-width: 0; margin-left: 8px; padding: 0; border: 0; outline: 0; color: #5c666e; background: linear-gradient(90deg, #1f2328 144px, #5c666e 144px); background-clip: text; -webkit-background-clip: text; -webkit-text-fill-color: transparent; font-size: 13px; }
.ext { position: relative; width: 24px; height: 34px; margin: 0 6px 0 14px; }
.ext-badge { position: absolute; left: 10px; top: 16px; padding: 0 2px; border-radius: 4px; background: #f6623d; color: #222; font-size: 10px; font-weight: 600; line-height: 14px; }
.vline { width: 2px; height: 16px; background: #a3c3f2; border-radius: 1px; margin: 0 16px 0 8px; }
.avatar { width: 20px; height: 20px; padding: 0; border: 0; border-radius: 50%; background: #0b8474; color: #fff; font-size: 11px; }
.dots { width: 20px; margin-left: 16px; }
.bookmarks { display: flex; align-items: center; height: 35px; padding: 0 15px 7px 18px; font-size: 11px; white-space: nowrap; }
.bookmarks a { display: flex; align-items: center; gap: 6px; margin-right: 18px; }
.bookmarks .vline { margin: 0 15px 0 13px; }
.bookmarks .more { margin-left: auto; }
.bookmarks .all { margin-right: 0; }

/* page */
.viewport { position: relative; flex: 1; display: flex; overflow: hidden; }
.page { flex: 1; min-width: 0; }
.scrollbar { width: 15px; display: flex; flex-direction: column; align-items: center; gap: 6px; padding: 5px 0; background: #fcfcfc; }
.thumb { width: 9px; flex: 1; margin-bottom: 18px; border-radius: 5px; background: #868686; }
.site-header {
  display: flex; align-items: center; height: 85px; padding: 0 21px 2px 20px;
  background: linear-gradient(90deg, #006fa6, #0073b1 40%, #0082c3);
  color: #fff;
}
.logo { display: flex; align-items: center; justify-content: center; width: 110px; height: 68px; border-radius: 34px; background: #fff; }
.event { width: 121px; margin-left: 25px; padding-top: 2px; line-height: 24px; }
.event-name { font-size: 17px; }
.event-mode { font-size: 13px; }
.menu { width: 38px; height: 38px; padding: 0; display: flex; align-items: center; justify-content: center; border: 0; border-radius: 50%; background: #2d3033; }
.pill { height: 32px; border: 0; border-radius: 16px; background: #fff; color: #222; padding: 0; display: flex; align-items: center; justify-content: center; gap: 4px; }
.my-stuff { width: 108px; margin-left: 40px; font-weight: 500; }
.planner { width: 106px; margin-left: 15px; font-size: 11px; font-weight: 500; }
.account { display: flex; align-items: center; gap: 14px; margin-left: auto; font-family: "Open Sans", sans-serif; font-size: 15px; }
.account a:last-child { margin-left: 10px; }

.actions { display: flex; gap: 30px; padding: 10px 30px 11px; background: linear-gradient(#f6f6f6, #fdfdfd 8px); border-bottom: 1px solid #f6f6f6; }
.btn { display: flex; align-items: center; gap: 8px; height: 31px; padding: 0 21px 0 24px; border: 1px solid #e2e2e2; border-radius: 16px; background: #fff; color: #222; font-family: "Open Sans", sans-serif; font-size: 13px; font-weight: 600; white-space: nowrap; }
.btn.blue { background: #3178b8; border-color: #2c6ca8; color: #fff; }
.btn.red { background: #d81b5c; border-color: #c2185b; color: #fff; padding: 0 20px; }
.dispute-wrap { position: relative; }
.cursor { position: absolute; left: 43px; top: 19px; }

.queue-tabs { display: flex; gap: 2px; height: 70px; padding: 10px; border-bottom: 1px solid #e4e4e4; }
.queue-tabs a { display: flex; align-items: center; gap: 4px; height: 47px; padding: 0 20px 4px; border-bottom: 2px solid transparent; }
.queue-tabs .current { border-color: #05709e; color: #6a6f73; }
.count { width: 19px; border-radius: 4px; background: #bbb; color: #fff; font-size: 14px; line-height: 20px; text-align: center; }

.filters { padding: 20px 20px 0; font-family: "Open Sans", sans-serif; font-size: 13px; }
.filter-row { display: flex; height: 30px; }
.filter-row strong { width: 118px; padding-top: 3px; font-weight: 600; }
.filter-row label { display: flex; align-items: center; gap: 6px; width: 164px; white-space: nowrap; }
.filter-row input { appearance: none; flex: none; width: 20px; height: 20px; margin: 0; border: 2px solid #9fa1a3; background: #fff; }

.queue { width: calc(100% - 39px); margin: 34px 19px 0 20px; table-layout: fixed; border-collapse: separate; border-spacing: 0; border-top: 1px solid #f0f0f0; font-family: "Open Sans", sans-serif; font-size: 15px; line-height: 23px; }
.c-opt { width: 151px; } .c-print { width: 61px; } .c-clip { width: 60px; } .c-start { width: 145px; } .c-court { width: 100px; }
.c-todo { width: 77px; } .c-on { width: 71px; } .c-comp { width: 67px; } .c-total { width: 70px; } .c-end { width: 75px; }
.queue th, .queue td { padding: 0; text-align: center; border-right: 1px solid #dadada; border-bottom: 1px solid #dadada; }
.queue tr > :last-child { border-right-color: #f0f0f0; }
.queue th { height: 53px; padding-bottom: 10px; font-weight: 600; vertical-align: bottom; }
.queue .sub th { height: 36px; }
.queue th.left { padding-left: 15px; text-align: left; }
.queue th.matches { padding: 0 17px; border-bottom: 0; }
.matches div { padding-bottom: 2px; border-bottom: 1px solid #e2e2e2; }
.queue .open { border-right: 0; }
.queue .todo { padding-left: 6px; }
.queue .total { padding-right: 16px; border-right-color: #dadada; }
.queue .shade td { background: #f8f8f8; }
.queue .totals td { height: 37px; padding-bottom: 2px; }
.queue .sum { padding-right: 30px; text-align: right; }
.queue .group td { height: 33px; padding-left: 12px; text-align: left; background: #ebebeb; border-bottom-color: #cfcfcf; }
.item td { height: 94px; }
.queue .time { padding-left: 12px; text-align: left; }
.num { display: block; width: fit-content; min-width: 29px; margin: 0 auto 3px; padding: 0 10px; border-radius: 4px; background: #bbb; color: #fff; line-height: 20px; }
.num.hot { background: #3178b8; }
.options { width: 92px; height: 32px; margin-right: 11px; padding: 0; border: 1px solid #2c6ca8; border-radius: 16px; background: #3178b8; color: #fff; font-size: 13px; font-weight: 600; }
.round { display: flex; align-items: center; justify-content: center; width: 36px; height: 35px; margin: 0 auto; padding: 0; border: 0; border-radius: 50%; background: #3178b8; color: #fff; }
.queue .sheet { padding-right: 4px; }
.sheet .round { width: 33px; }
.entry { display: flex; gap: 6px; padding: 0 0 2px 21px; text-align: left; }
.name { font-weight: 600; line-height: 24px; }
.meta { display: flex; align-items: center; gap: 4px; font-family: "Noto Sans", sans-serif; font-size: 13px; line-height: 20px; }

/* overlays */
.recorder { position: absolute; left: 28px; bottom: 16px; display: flex; align-items: center; gap: 16px; }
.camera { width: 48px; height: 48px; padding: 0; display: flex; align-items: center; justify-content: center; border: 0; border-radius: 50%; background: #1c1c1c; }
.rec-bar { display: flex; align-items: center; gap: 15px; height: 52px; padding: 0 24px 0 16px; border-radius: 26px; background: #1c1c1c; color: #fff; }
.stop { display: flex; align-items: center; justify-content: center; width: 36px; height: 36px; padding: 0; border: 0; border-radius: 50%; background: #ff5c35; }
.spaced { margin-left: 4px; }
.clock { font: 600 15px Inter, sans-serif; }
.rec-sep { width: 1px; height: 28px; background: #444; }
.status { position: absolute; left: 0; bottom: 0; height: 21px; padding: 0 7px 0 5px; border-radius: 0 3px 0 0; background: #7fa8e2; color: #16283e; font-size: 11px; line-height: 20px; }

/* taskbar */
.taskbar { display: flex; align-items: center; height: 48px; padding-bottom: 2px; border-top: 1px solid #bfb5ae; background: linear-gradient(90deg, #dad8d8, #e6d7ce 20%, #ead8cc 60%, #f3dfd2); font-size: 11px; line-height: 16px; }
.weather { display: flex; gap: 0; width: 503px; padding: 0 0 0 20px; border: 0; background: none; text-align: left; }
.weather > span { padding-top: 1px; }
.w1, .w2 { display: block; }
.w1 { color: #222; }
.w2 { color: #555; }
.tb-center { display: flex; align-items: center; flex: 1; }
.app { position: relative; width: 44px; height: 38px; }
.tb-center > .app:first-child { width: 31px; }
.run::after, .front::after { content: ""; position: absolute; bottom: -1px; left: 19px; width: 6px; height: 3px; border-radius: 2px; background: #8b7f78; }
.front { background: linear-gradient(#f7eeea, #f7eeea) center / 38px 38px no-repeat; }
.front::after { left: 14px; width: 16px; background: #1c6fb8; }
.search { display: flex; align-items: center; gap: 10px; width: 218px; height: 30px; margin: 0 3px 0 10px; padding: 0 8px 0 11px; border: 1px solid #dccfc6; border-radius: 15px; background: #faf4f0; }
.search input { flex: 1; min-width: 0; padding: 0; border: 0; outline: 0; background: none; font-size: 13px; }
.search input::placeholder { color: #5c5c5c; }
.datetime { padding-right: 23px; text-align: right; color: #5a4f49; }
```
